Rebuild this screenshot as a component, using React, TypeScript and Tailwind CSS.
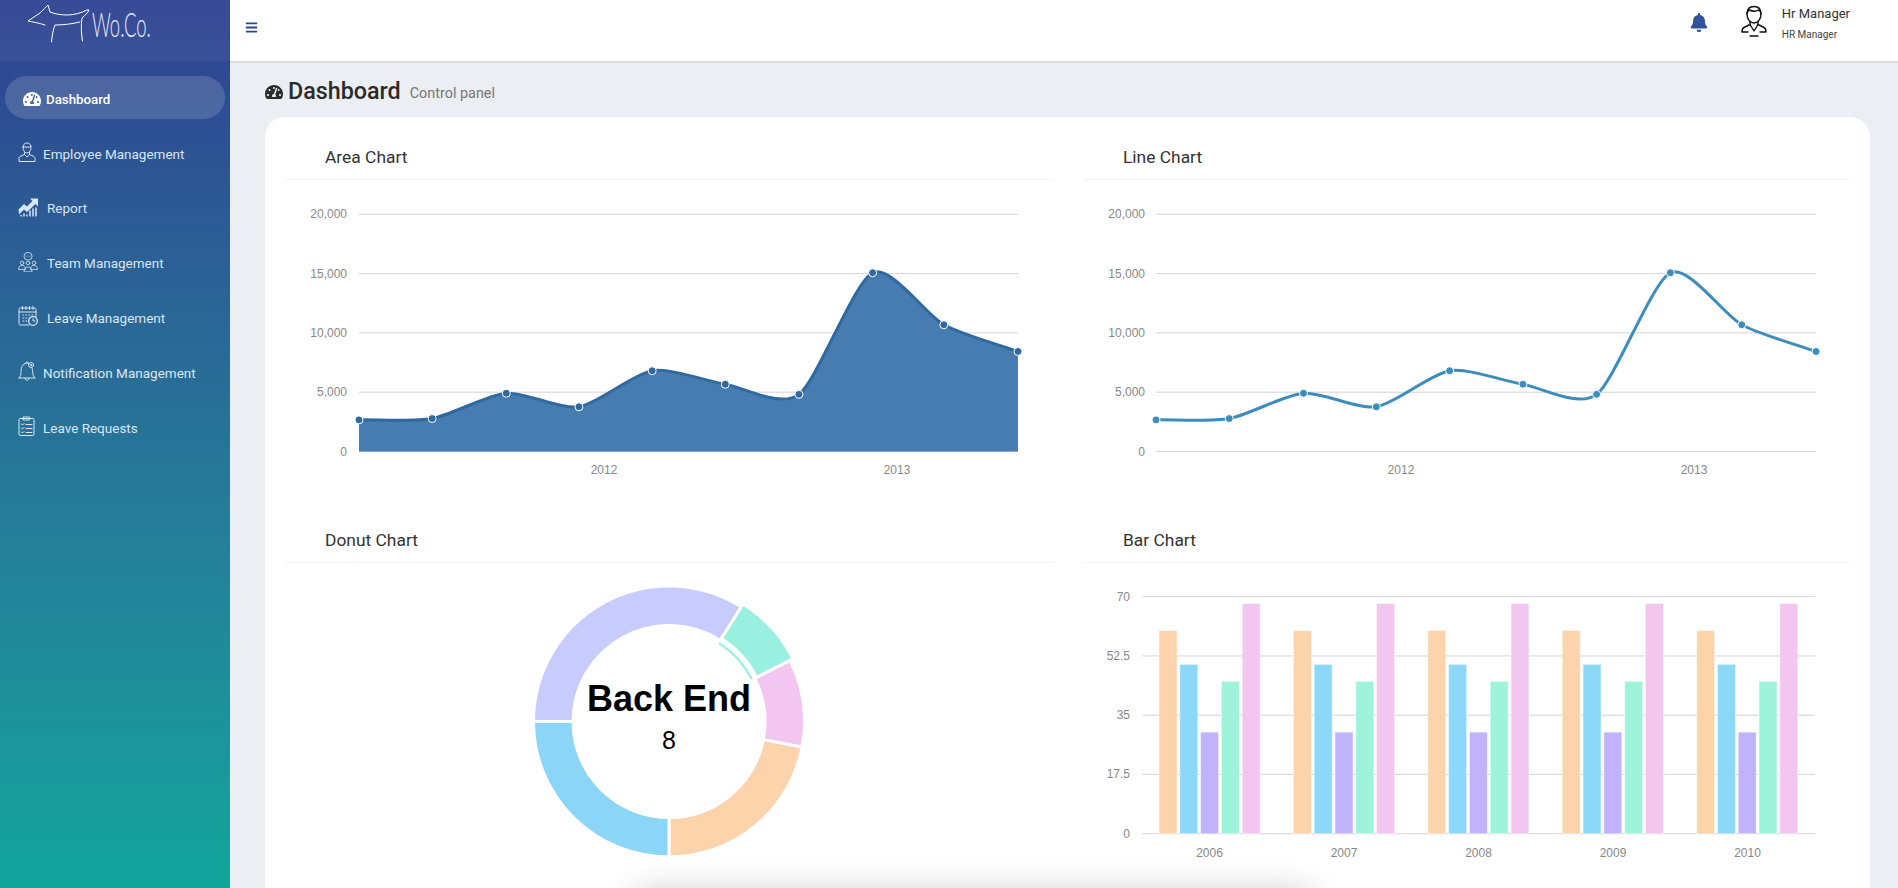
import { FaBars, FaBell, FaTachometerAlt } from "react-icons/fa";

const areaData = [2666, 2778, 4912, 3767, 6810, 5670, 4820, 15073, 10687, 8432];
const spots = [0, 0.111, 0.2235, 0.3338, 0.4449, 0.5559, 0.6676, 0.7794, 0.8875, 1];

// morris.js style smooth line through the quarters
const buildLine = (x0: number, x1: number) => {
    const pts = areaData.map((v, i) => ({
        x: x0 + spots[i] * (x1 - x0),
        y: 271.5 - (v / 20000) * 237.2,
    }));
    const grads = pts.map((p, i) => {
        const prev = pts[i - 1];
        const next = pts[i + 1];
        if (prev && next) return (next.y - prev.y) / (next.x - prev.x);
        if (prev) return (p.y - prev.y) / (p.x - prev.x);
        return (next.y - p.y) / (next.x - p.x);
    });
    let d = `M${pts[0].x},${pts[0].y}`;
    for (let i = 1; i < pts.length; i++) {
        const ix = (pts[i].x - pts[i - 1].x) / 4;
        d += `C${pts[i - 1].x + ix},${pts[i - 1].y + ix * grads[i - 1]} ${pts[i].x - ix},${pts[i].y - ix * grads[i]} ${pts[i].x},${pts[i].y}`;
    }
    return { pts, d };
};

const Axis = ({ x0, x1, labelX, years }: { x0: number; x1: number; labelX: number; years: [string, number][] }) => (
    <g fontFamily="'Liberation Sans', sans-serif" fontSize="12" fill="#888888">
        {["20,000", "15,000", "10,000", "5,000", "0"].map((label, i) => {
            const y = 34.3 + i * 59.3;
            return (
                <g key={label}>
                    <line x1={x0} x2={x1} y1={y} y2={y} stroke="#aaaaaa" strokeOpacity="0.5" />
                    <text x={labelX} y={y + 4} textAnchor="end">{label}</text>
                </g>
            );
        })}
        {years.map(([label, x]) => (
            <text key={label} x={x} y={294} textAnchor="middle">{label}</text>
        ))}
    </g>
);

const AreaChart = () => {
    const { pts, d } = buildLine(74, 733);
    return (
        <svg width="767" height="320" className="block">
            <Axis x0={74} x1={733} labelX={62} years={[["2012", 319], ["2013", 612]]} />
            <path d={`${d}L733,271.5L74,271.5Z`} fill="#477cb1" />
            <path d={d} fill="none" stroke="#2f69a0" strokeWidth="3" />
            {pts.map((p) => (
                <circle key={p.x} cx={p.x} cy={p.y} r="4" fill="#2f69a0" stroke="#ffffff" strokeWidth="1" />
            ))}
        </svg>
    );
};

const LineChart = () => {
    const { pts, d } = buildLine(73, 733);
    return (
        <svg width="767" height="320" className="block">
            <Axis x0={73} x1={733} labelX={62} years={[["2012", 318], ["2013", 611]]} />
            <path d={d} fill="none" stroke="#3c8dbc" strokeWidth="3" />
            {pts.map((p) => (
                <circle key={p.x} cx={p.x} cy={p.y} r="4" fill="#3c8dbc" stroke="#ffffff" strokeWidth="1" />
            ))}
        </svg>
    );
};

const arc = (cx: number, cy: number, ro: number, ri: number, from: number, to: number) => {
    const a = (from * Math.PI) / 180;
    const b = (to * Math.PI) / 180;
    const pt = (r: number, t: number) => `${cx + r * Math.sin(t)},${cy + r * Math.cos(t)}`;
    const large = to - from > 180 ? 1 : 0;
    return `M${pt(ro, a)}A${ro},${ro} 0 ${large} 0 ${pt(ro, b)}L${pt(ri, b)}A${ri},${ri} 0 ${large} 1 ${pt(ri, a)}Z`;
};

const donutSegments = [
    { from: 0, to: 79.2, color: "#fdd3ab" },
    { from: 79.2, to: 116.8, color: "#f2c6f0" },
    { from: 116.8, to: 147.8, color: "#99efe0", selected: true },
    { from: 147.8, to: 270, color: "#c7ccfc" },
    { from: 270, to: 360, color: "#8bd5f6" },
];

const DonutChart = () => (
    <svg width="767" height="330" className="block">
        {donutSegments.map((s) => (
            <g key={s.color}>
                <path
                    d={s.selected ? arc(384, 158.500, 139, 98, s.from, s.to) : arc(384, 158.500, 135.500, 96, s.from, s.to)}
                    fill={s.color}
                    stroke="#ffffff"
                    strokeWidth="3"
                />
                {s.selected && <path d={arc(384, 158.500, 94.500, 91.500, s.from, s.to)} fill={s.color} stroke="#ffffff" strokeWidth="1" />}
            </g>
        ))}
        <text x="384" y="148" textAnchor="middle" fontFamily="'Liberation Sans', sans-serif" fontSize="36" fontWeight="700" fill="#000000">
            Back End
        </text>
        <text x="384" y="186" textAnchor="middle" fontFamily="'Liberation Sans', sans-serif" fontSize="25" fill="#000000">
            8
        </text>
    </svg>
);

const bars = [
    { value: 60, color: "#fdd3ab" },
    { value: 50, color: "#8bd8f8" },
    { value: 30, color: "#c1b3fb" },
    { value: 45, color: "#9df4db" },
    { value: 68, color: "#f3c6f0" },
];

const BarChart = () => (
    <svg width="767" height="330" className="block">
        <g fontFamily="'Liberation Sans', sans-serif" fontSize="12" fill="#888888">
            {["70", "52.5", "35", "17.5", "0"].map((label, i) => {
                const y = 33.7 + i * 59.25;
                return (
                    <g key={label}>
                        <line x1={59.3} x2={732} y1={y} y2={y} stroke="#aaaaaa" strokeOpacity="0.5" />
                        <text x={47} y={y + 4} textAnchor="end">{label}</text>
                    </g>
                );
            })}
            {["2006", "2007", "2008", "2009", "2010"].map((year, g) => (
                <g key={year}>
                    {bars.map((b, i) => {
                        const h = (b.value / 70) * 237;
                        return (
                            <rect
                                key={b.color}
                                x={76 + g * 134.4 + i * 20.8}
                                y={270.7 - h}
                                width="18"
                                height={h}
                                fill={b.color}
                                stroke="#ffffff"
                                strokeOpacity="0.5"
                            />
                        );
                    })}
                    <text x={126.5 + g * 134.5} y={294} textAnchor="middle">{year}</text>
                </g>
            ))}
        </g>
    </svg>
);

const line = { fill: "none", stroke: "currentColor", strokeWidth: 1, strokeLinecap: "round", strokeLinejoin: "round" } as const;

const EmployeeIcon = () => (
    <svg width="20" height="20" viewBox="0 0 20 20" {...line}>
        <path d="M5 5.500C5 2.500 6.500 1 9 1s4 1.500 4 4.500c0 3-1.800 5.500-4 5.500S5 8.500 5 5.500Z" />
        <path d="M5 4.500c2.500 1 5.500 1 8 0" />
        <path d="M6.500 10.500v2L2 14.500c-.7.4-1 1-1 2v3h16v-3c0-1-.3-1.600-1-2l-4.500-2v-2" />
        <path d="M6.500 12.500 9 15l2.500-2.500" />
    </svg>
);

const ReportIcon = () => (
    <svg width="20" height="20" viewBox="0 0 20 20">
        <path d="M0.500 12.500 6 7l3 2.500 5.500-5.500-2.500-2.500h8v8L17.500 7 9 15 6 12.500l-5 5Z" fill="currentColor" />
        <path d="M3 19.500v-1.500M6 19.500v-3M9 19.500v-2M12 19.500v-6M15 19.500v-8M18 19.500v-9" stroke="currentColor" strokeWidth="1.500" />
    </svg>
);

const TeamIcon = () => (
    <svg width="20" height="20" viewBox="0 0 20 20" {...line} strokeWidth={0.8}>
        <rect x="6" y="0.500" width="8" height="7.500" rx="3.500" />
        <path d="M8 4.200h.1M10 4.200h.1M12 4.200h.1" />
        <circle cx="4" cy="11" r="1.800" />
        <circle cx="10" cy="11" r="1.800" />
        <circle cx="16" cy="11" r="1.800" />
        <path d="M.5 17c0-2.500 1.500-3.500 3.500-3.500s3.500 1 3.500 3.500Z" />
        <path d="M12.500 17c0-2.500 1.500-3.500 3.500-3.500s3.500 1 3.500 3.500Z" />
        <path d="M6 19.500c0-3 1.800-4.500 4-4.500s4 1.500 4 4.500Z" />
    </svg>
);

const LeaveIcon = () => (
    <svg width="20" height="20" viewBox="0 0 20 20" {...line}>
        <path d="M11 19H2.500C1.500 19 1 18.500 1 17.500V3.500C1 2.500 1.500 2 2.500 2h14c1 0 1.500.5 1.500 1.500V11" />
        <path d="M4.500 .5v3M8 .5v3M11.500 .5v3M15 .5v3M1 6h17" />
        <path d="M5 9h.8M8 9h.8M11 9h.8M14 9h.8M5 12h.8M8 12h.8M11 12h.8M5 15h.8M8 15h.8" strokeWidth={1.200} />
        <circle cx="15" cy="15" r="4.300" strokeWidth={1.300} />
        <path d="M15 12.800V15h2" />
    </svg>
);

const NotificationIcon = () => (
    <svg width="20" height="20" viewBox="0 0 20 20" {...line}>
        <path d="M1 17c1.500-1.500 2-3 2-6.500C3 6.500 4.500 3.500 7 2.500c1-.5 2-.5 3-.3" />
        <path d="M14 7c.5 1 .7 2.200.7 3.500 0 3.500.7 5 2.300 6.500" />
        <path d="M1 17h16" />
        <path d="M7 17.500c0 2.500 4 2.500 4 0" />
        <circle cx="13" cy="4" r="2.500" />
        <circle cx="13" cy="4" r=".6" />
        <path d="M7.500 2.500c0-2 3-2 3 0" />
    </svg>
);

const RequestsIcon = () => (
    <svg width="20" height="20" viewBox="0 0 20 20" {...line}>
        <rect x="1" y="2.500" width="15" height="17" rx="1.200" />
        <path d="M5.500 1h6v3h-6Z" />
        <path d="M3.500 8l1 1 1.500-1.500M3.500 12l1 1 1.500-1.500M3.500 16l1 1 1.500-1.500" />
        <path d="M8 8.500h6M8 12.500h6M8 16.500h6" />
    </svg>
);

const navItems = [
    { label: "Employee Management", icon: <EmployeeIcon />, textClass: "ml-[5px] mt-1" },
    { label: "Report", icon: <ReportIcon />, textClass: "ml-[9px] mt-[3px]" },
    { label: "Team Management", icon: <TeamIcon />, textClass: "ml-[9px] mt-[3px]" },
    { label: "Leave Management", icon: <LeaveIcon />, textClass: "ml-[9px] mt-1" },
    { label: "Notification Management", icon: <NotificationIcon />, textClass: "ml-[5px] mt-1" },
    { label: "Leave Requests", icon: <RequestsIcon />, textClass: "ml-[5px] mt-1" },
];

const ChartBox = ({ title, children }: { title: string; children: React.ReactNode }) => (
    <div>
        <div className="border-b border-[#f4f4f4] pl-10 pt-[28px] pb-[10px]">
            <h3 className="text-[17.400px] leading-6 text-[#333]">{title}</h3>
        </div>
        {children}
    </div>
);

export default function App() {
    return (
        <div className="relative flex h-screen overflow-hidden bg-[#ebeef3] font-['Roboto',sans-serif]">
            <aside className="h-full w-[230px] shrink-0 bg-gradient-to-b from-[#2e4190] to-[#10a59b] text-[#d8e6f5]">
                <div className="flex h-[61px] items-start bg-white/5 pl-[28px] pt-1">
                    <svg width="64" height="40" viewBox="0 0 64 40" fill="none" stroke="#ffffff" strokeWidth="1" strokeLinecap="round" strokeLinejoin="round">
                        <path d="M0 17c4-3 8-5 12-8 3-3 6-6 8-8l2 7c5 2 11 3 17 3 7 0 14-2 20-5h2c-1 3-4 5-7 8-1 7-1 15 .5 23" />
                        <path d="M0 17c5 1 11 2 17 4" />
                        <path d="M52 18c-8 2-17 3-25 3-2 5-3 11-3.500 17" />
                    </svg>
                    <span className="mt-[2px] inline-block origin-left scale-x-[.56] font-['Lato',sans-serif] text-[33px] font-light leading-9 text-[#e6ebf7]">
                        Wo.Co.
                    </span>
                </div>
                <nav className="flex flex-col gap-[11.700px] pl-[5px] pr-[5px] pt-[15px] text-[13.500px]">
                    <a className="flex h-[43px] items-center rounded-full bg-white/15 pl-[18px] font-medium text-white">
                        <FaTachometerAlt className="mt-[2px] h-[18px] w-[18px]" />
                        <span className="ml-[5px] mt-1 text-[13.300px]">Dashboard</span>
                    </a>
                    {navItems.map((item) => (
                        <a key={item.label} className="flex h-[43px] items-center pl-[13px]">
                            {item.icon}
                            <span className={item.textClass}>{item.label}</span>
                        </a>
                    ))}
                </nav>
            </aside>

            <main className="flex min-w-0 flex-1 flex-col">
                <header className="flex h-[63px] shrink-0 items-start border-b-2 border-[#dcdcdc] bg-white pl-[15px] pr-[48px]">
                    <FaBars className="mt-[21px] h-[13px] w-[13px] text-[#2b4595]" />
                    <FaBell className="ml-auto mt-[13px] h-[19px] w-[18px] text-[#2f549c]" />
                    <svg className="ml-[33px] mt-[5px]" width="26" height="33" viewBox="0 0 26 33" fill="none" stroke="#111111" strokeWidth="1.400" strokeLinecap="round" strokeLinejoin="round">
                        <path d="M6 9c0-5 3-7.500 7-7.500S20 4 20 9c0 5-3 9-7 9S6 14 6 9Z" />
                        <path d="M6 9c0-2 1-3.500 2.500-4 3 1.500 6.500 1.500 9 0C19 5.500 20 7 20 9" />
                        <path d="M9 16.500v3L3 22.500c-1.500.7-2 2-2 4.500h6M19 27h6c0-2.500-.5-3.800-2-4.500l-6-3v-3" />
                        <path d="M9 19.500 13 26l4-6.500M9 31h8" />
                    </svg>
                    <div className="ml-[15px] pt-[5px] text-[#333]">
                        <p className="text-[13px] leading-[18px]">Hr Manager</p>
                        <p className="mt-[5px] text-[10px] leading-[14px] text-[#444]">HR Manager</p>
                    </div>
                </header>

                <div className="flex h-[54px] shrink-0 items-center pl-[35px] text-[#2b2b2b]">
                    <FaTachometerAlt className="mt-[3px] h-[18px] w-[18px]" />
                    <h1 className="ml-[5px] mt-[2px] text-[23.300px] font-medium leading-8">Dashboard</h1>
                    <span className="ml-[9px] mt-[8px] text-[14.400px] text-[#777]">Control panel</span>
                </div>

                <section className="ml-[35px] mr-[28px] grid shrink-0 grid-cols-[769px_1fr] gap-x-[29px] rounded-t-[20px] bg-white px-5">
                    <ChartBox title="Area Chart"><AreaChart /></ChartBox>
                    <ChartBox title="Line Chart"><LineChart /></ChartBox>
                    <ChartBox title="Donut Chart"><DonutChart /></ChartBox>
                    <ChartBox title="Bar Chart"><BarChart /></ChartBox>
                </section>
            </main>

            {/* shadow of a panel that sits just under the fold */}
            <div className="absolute left-[636px] top-[892px] h-10 w-[675px] shadow-[0_0_32px_rgba(0,0,0,0.22)]"></div>
        </div>
    );
}
